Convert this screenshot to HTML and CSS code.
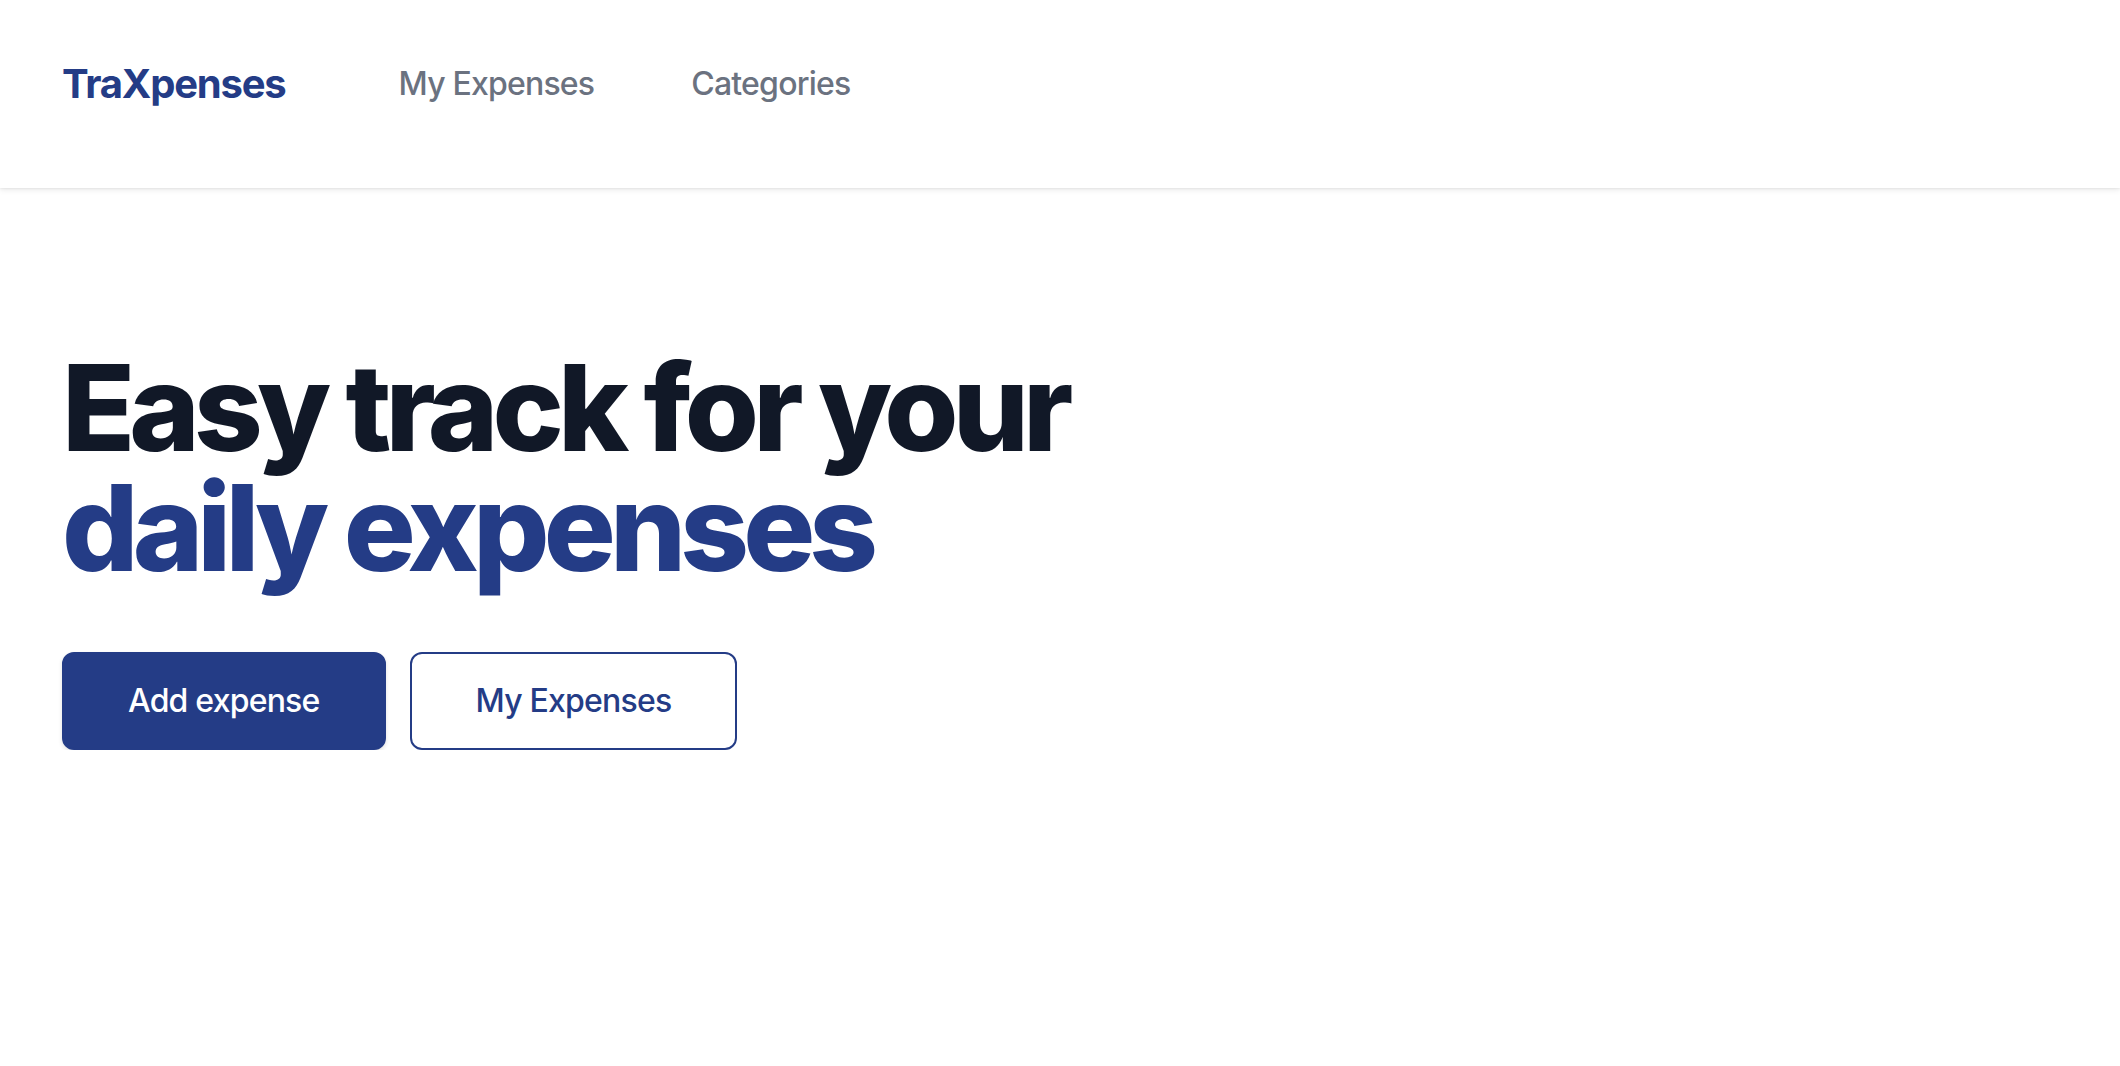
FILE: index.html
```html
<!DOCTYPE html>
<html lang="en">
<head>
<meta charset="utf-8">
<title>TraXpenses</title>
<link rel="stylesheet" href="styles.css">
</head>
<body>
<header class="header">
  <div class="header-row">
    <a class="logo" href="#">TraXpenses</a>
    <nav class="nav">
      <a class="nav-link" href="#">My Expenses</a>
      <a class="nav-link" href="#">Categories</a>
    </nav>
  </div>
</header>
<main class="hero">
  <h1 class="title">
    <span class="title-line">Easy track for your</span>
    <span class="title-line accent">daily expenses</span>
  </h1>
  <div class="actions">
    <a class="btn btn-primary" href="#">Add expense</a>
    <a class="btn btn-outline" href="#">My Expenses</a>
  </div>
</main>
</body>
</html>
```

FILE: styles.css
```css
* { box-sizing: border-box; }
html, body { margin: 0; padding: 0; }
body {
  font-family: Inter, "Noto Sans", "Liberation Sans", sans-serif;
  background: #ffffff;
  color: #111827;
}
a { text-decoration: none; }

.header {
  height: 188px;
  padding: 56px 62px 0;
  box-shadow: 0 2px 6px rgba(0, 0, 0, 0.08), 0 1px 2px rgba(0, 0, 0, 0.06);
}
.header-row {
  display: flex;
  align-items: center;
  height: 56px;
}
.logo {
  font-size: 40px;
  line-height: 56px;
  font-weight: 700;
  color: #243c86;
  letter-spacing: -0.03em;
}
.nav {
  display: flex;
  gap: 97px;
  margin-left: 113px;
}
.nav-link {
  font-size: 32px;
  line-height: 48px;
  font-weight: 500;
  color: #6b7280;
  letter-spacing: -0.025em;
}

.hero {
  padding: 160px 62px 0;
}
.title {
  margin: 0;
  font-size: 120px;
  line-height: 120px;
  font-weight: 800;
  letter-spacing: -0.049em;
  color: #111827;
}
.title-line { display: block; }
.accent { color: #243c86; }

.actions {
  display: flex;
  gap: 24px;
  margin-top: 64px;
}
.btn {
  display: inline-block;
  padding: 23px 64px;
  border: 2px solid #243c86;
  border-radius: 12px;
  font-size: 32px;
  line-height: 48px;
  font-weight: 500;
  letter-spacing: -0.025em;
}
.btn-primary {
  background: #243c86;
  color: #ffffff;
  box-shadow: 0 2px 4px rgba(0, 0, 0, 0.12);
}
.btn-outline {
  background: #ffffff;
  color: #243c86;
}
```
